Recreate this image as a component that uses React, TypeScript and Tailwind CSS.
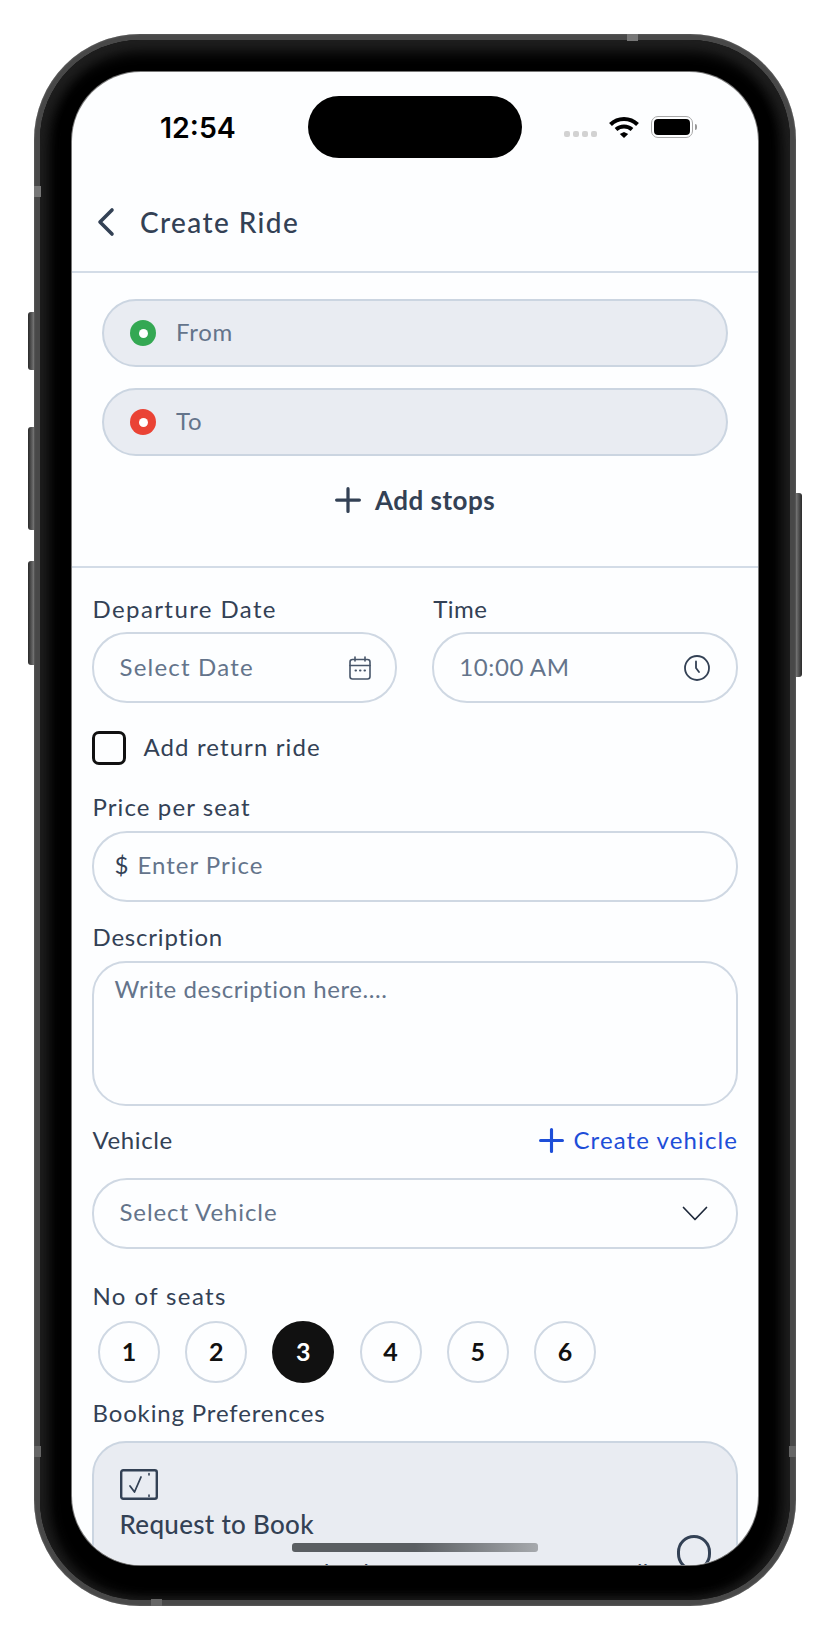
import React from "react";

const Plus = ({ c, size = 24, w = 3 }: { c: string; size?: number; w?: number }) => (
  <svg width={size} height={size} viewBox="0 0 24 24" fill="none" stroke={c} strokeWidth={w} strokeLinecap="round">
    <path d="M1.5 12H22.5M12 1.5V22.5" />
  </svg>
);

function Field({ children, className = "" }: { children: React.ReactNode; className?: string }) {
  return (
    <div className={"flex items-center h-[71px] rounded-[35px] border-2 border-[#cfd8e3] bg-[#fdfeff] " + className}>
      {children}
    </div>
  );
}

function Label({ children, className = "" }: { children: React.ReactNode; className?: string }) {
  return <div className={"flex items-center h-[24px] pl-[1px] text-[24px] leading-[24px] text-[#334155] " + className}>{children}</div>;
}

function Loc({ color, text, className = "" }: { color: string; text: string; className?: string }) {
  return (
    <div className={"flex items-center h-[68px] rounded-[34px] border-2 border-[#cbd5e1] bg-[#e9ecf2] pl-[26px] " + className}>
      <div className={"flex items-center justify-center w-[26px] h-[26px] rounded-full " + color}>
        <div className="w-[9px] h-[9px] rounded-full bg-white" />
      </div>
      <span className="ml-[20px] mb-[2px] text-[24px] text-[#64748b] tracking-[0.7px]">{text}</span>
    </div>
  );
}

export default function App() {
  const seats = [1, 2, 3, 4, 5, 6];
  return (
    <div className="relative w-[828px] h-[1643px] bg-white overflow-hidden pt-[34px] pl-[34px]" style={{ fontFamily: "Lato, sans-serif" }}>
      <div className="relative w-[762px] h-[1572px] rounded-[106px] bg-[#484848] p-[6px] shadow-[inset_0_0_2px_#777]">
        {/* side buttons */}
        <div className="absolute left-[-6px] top-[278px] w-[6px] h-[58px] rounded-l-[3px] bg-gradient-to-r from-[#2a2a2a] to-[#777]" />
        <div className="absolute left-[-6px] top-[393px] w-[6px] h-[103px] rounded-l-[3px] bg-gradient-to-r from-[#2a2a2a] to-[#777]" />
        <div className="absolute left-[-6px] top-[527px] w-[6px] h-[104px] rounded-l-[3px] bg-gradient-to-r from-[#2a2a2a] to-[#777]" />
        <div className="absolute right-[-6px] top-[459px] w-[6px] h-[184px] rounded-r-[3px] bg-gradient-to-l from-[#2a2a2a] to-[#777]" />
        {/* antenna bands */}
        <div className="absolute left-0 top-[152px] w-[7px] h-[11px] bg-[#777]" />
        <div className="absolute left-0 top-[1412px] w-[7px] h-[11px] bg-[#666]" />
        <div className="absolute right-0 top-[1412px] w-[7px] h-[11px] bg-[#666]" />
        <div className="absolute top-0 left-[593px] w-[11px] h-[7px] bg-[#777]" />
        <div className="absolute bottom-0 left-[117px] w-[11px] h-[7px] bg-[#666]" />

        <div className="w-full h-full rounded-[100px] bg-black p-[32px] shadow-[inset_0_10px_14px_2px_#1e1e1e,inset_8px_0_14px_0_#1e1e1e,inset_-8px_0_14px_0_#1e1e1e]">
          <div className="relative flex flex-col w-full h-[1493px] rounded-[69px] overflow-hidden bg-[#fdfeff] shadow-[0_0_0_1px_#777]">
            {/* status bar */}
            <div className="relative flex items-start h-[100px] shrink-0">
              <span className="ml-[88px] mt-[38px] text-[28.5px] leading-[36px] font-semibold text-black w-[148px]" style={{ fontFamily: "Inter, sans-serif" }}>12:54</span>
              <div className="mt-[24px] w-[214px] h-[62px] rounded-[31px] bg-black" />
              <div className="flex items-center ml-[42px] mt-[44px]">
                <div className="flex gap-[3px] mt-[13px]">
                  <div className="w-[6px] h-[6px] rounded-[2px] bg-[#d2d2d2]" />
                  <div className="w-[6px] h-[6px] rounded-[2px] bg-[#d2d2d2]" />
                  <div className="w-[6px] h-[6px] rounded-[2px] bg-[#d2d2d2]" />
                  <div className="w-[6px] h-[6px] rounded-[2px] bg-[#d2d2d2]" />
                </div>
                <svg className="ml-[12px]" width="30" height="22" viewBox="0 0 30 22" fill="none" stroke="#000" strokeWidth="4">
                  <path d="M1.5 8.5C9 1 21 1 28.5 8.5" />
                  <path d="M7 13.5C11.5 9.5 18.5 9.5 23 13.5" />
                  <path d="M15 16L10.8 18L15 22L19.2 18Z" fill="#000" stroke="none" />
                </svg>
                <div className="ml-[12px] flex items-center justify-center w-[42px] h-[22px] rounded-[7px] border-[1.5px] border-[#a8a8a8]">
                  <div className="w-[36px] h-[16px] rounded-[4px] bg-black" />
                </div>
                <div className="ml-[2px] w-[2px] h-[6px] rounded-r-[2px] bg-[#999]" />
              </div>
            </div>
            {/* header */}
            <div className="flex items-center h-[101px] shrink-0 border-b-2 border-[#d3dce7] pl-[24px]">
              <svg width="22" height="30" viewBox="0 0 22 30" fill="none" stroke="#334155" strokeWidth="3.6" strokeLinecap="round" strokeLinejoin="round">
                <path d="M16 3L4 15L16 27" />
              </svg>
              <span className="ml-[22px] text-[28px] font-medium text-[#334155] tracking-[1.4px]">Create Ride</span>
            </div>
            {/* route */}
            <div className="flex flex-col shrink-0 h-[295px] border-b-2 border-[#d3dce7] px-[30px] pt-[26px]">
              <Loc color="bg-[#34a853]" text="From" />
              <Loc color="bg-[#ea4335]" text="To" className="mt-[21px]" />
              <div className="flex items-center justify-center mt-[30px] h-[28px]">
                <Plus c="#334155" size={26} />
                <span className="ml-[14px] text-[26px] font-bold text-[#334155] tracking-[0.5px]">Add stops</span>
              </div>
            </div>
            {/* form */}
            <div className="flex flex-col shrink-0 pl-[19.5px] pr-[20px] pt-[29px]">
              <div className="flex gap-[35px]">
                <div className="flex-1">
                  <Label className="tracking-[1.4px]">Departure Date</Label>
                  <Field className="mt-[11px] pl-[26px] pr-[24px] justify-between">
                    <span className="mb-[2px] text-[24px] text-[#64748b] tracking-[1.2px]">Select Date</span>
                    <svg width="22" height="24" viewBox="0 0 22 24" fill="none" stroke="#475569" strokeWidth="1.6" strokeLinecap="round">
                      <rect x="1" y="3.5" width="20" height="19.5" rx="2.5" />
                      <path d="M1 9.5H21M6 1V5M16 1V5" />
                      <path d="M6.5 14.5H7M11 14.5H11.5M15.5 14.5H16" strokeWidth="2" />
                    </svg>
                  </Field>
                </div>
                <div className="flex-1">
                  <Label className="tracking-[0.5px]">Time</Label>
                  <Field className="mt-[11px] pl-[25px] pr-[26px] justify-between">
                    <span className="mb-[2px] text-[24px] text-[#64748b] tracking-[0.6px]">10:00 AM</span>
                    <svg width="26" height="26" viewBox="0 0 26 26" fill="none" stroke="#334155" strokeWidth="1.8" strokeLinecap="round">
                      <circle cx="13" cy="13" r="12" />
                      <path d="M12 6.5V13L15 17" />
                    </svg>
                  </Field>
                </div>
              </div>
              <div className="flex items-center mt-[28px] h-[34px]">
                <div className="w-[34px] h-[34px] rounded-[7px] border-[3px] border-[#111] bg-[#fdfeff]" />
                <span className="ml-[18px] mb-[2px] text-[24px] text-[#334155] tracking-[1.1px]">Add return ride</span>
              </div>
              <Label className="mt-[30px] tracking-[1.1px]">Price per seat</Label>
              <Field className="mt-[12px] pl-[21px]">
                <span className="mb-[4px] text-[24px] text-[#334155]">$</span>
                <span className="ml-[9px] mb-[4px] text-[24px] text-[#64748b] tracking-[1px]">Enter Price</span>
              </Field>
              <Label className="mt-[23px] tracking-[0.8px]">Description</Label>
              <div className="mt-[12px] h-[145px] rounded-[34px] border-2 border-[#cfd8e3] bg-[#fdfeff] pl-[21px] pt-[9px]">
                <span className="text-[24px] leading-[34px] text-[#64748b] tracking-[0.55px]">Write description here....</span>
              </div>
              <div className="flex items-center justify-between mt-[22px] h-[24px]">
                <Label className="tracking-[0.6px]">Vehicle</Label>
                <div className="flex items-center">
                  <Plus c="#1d4ed8" size={25} />
                  <span className="ml-[9px] text-[24px] text-[#1d4ed8] tracking-[1.1px]">Create vehicle</span>
                </div>
              </div>
              <Field className="mt-[26px] pl-[26px] pr-[28px] justify-between">
                <span className="mb-[4px] text-[24px] text-[#64748b] tracking-[0.9px]">Select Vehicle</span>
                <svg width="26" height="15" viewBox="0 0 26 15" fill="none" stroke="#1e293b" strokeWidth="1.7" strokeLinecap="round" strokeLinejoin="round">
                  <path d="M1.5 1.5L13 13.5L24.5 1.5" />
                </svg>
              </Field>
              <Label className="mt-[35px] tracking-[1.4px]">No of seats</Label>
              <div className="flex gap-[25.2px] mt-[13px] ml-[6.5px]">
                {seats.map((n) => (
                  <div
                    key={n}
                    className={
                      n === 3
                        ? "flex items-center justify-center w-[62px] h-[62px] rounded-full bg-[#111] text-white text-[25px] font-bold"
                        : "flex items-center justify-center w-[62px] h-[62px] rounded-full border-2 border-[#cfd8e3] text-[#111] text-[25px] font-bold"
                    }
                  >
                    {n}
                  </div>
                ))}
              </div>
              <Label className="mt-[18px] tracking-[0.85px]">Booking Preferences</Label>
              <div className="mt-[16px] h-[200px] rounded-[34px] border-2 border-[#cbd5e1] bg-[#e9ecf2] pl-[26px] pr-[25px] pt-[26px]">
                <svg width="38" height="31" viewBox="0 0 38 31" fill="none" stroke="#334155" strokeWidth="2.4" strokeLinecap="round" strokeLinejoin="round">
                  <rect x="1.2" y="1.2" width="35.6" height="28.6" rx="2" />
                  <path d="M10 17L14.5 23L21 8" strokeWidth="1.8" />
                  <path d="M29 4.5V6M29 26V27.5" strokeWidth="1.6" />
                </svg>
                <div className="flex justify-between">
                  <div className="min-w-0">
                    <div className="mt-[11px] h-[26px] leading-[26px] text-[26px] font-medium text-[#334155] tracking-[0.3px]">Request to Book</div>
                    <div className="mt-[20px] whitespace-nowrap text-[23px] leading-[30px] text-[#334155] tracking-[0.2px]">Approve request to book a seat on your car manually</div>
                  </div>
                  <div className="mt-[35px] w-[34px] h-[36px] rounded-full border-[3px] border-[#334155] shrink-0" />
                </div>
              </div>
            </div>
            {/* home bar */}
            <div className="absolute left-[220px] top-[1471px] w-[246px] h-[9px] rounded-[3px] bg-gradient-to-r from-[#5a5e62] via-[#5a5e62] to-[#a6a9ad]" />
          </div>
        </div>
      </div>
    </div>
  );
}
